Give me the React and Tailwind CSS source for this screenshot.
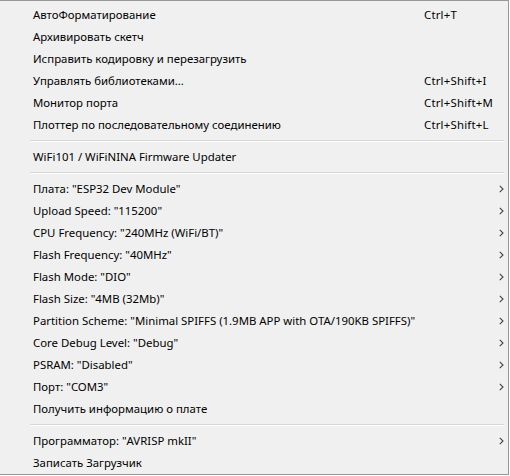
import React from 'react';

const groups = [
  [
    { label: 'АвтоФорматирование', shortcut: 'Ctrl+T' },
    { label: 'Архивировать скетч' },
    { label: 'Исправить кодировку и перезагрузить' },
    { label: 'Управлять библиотеками...', shortcut: 'Ctrl+Shift+I' },
    { label: 'Монитор порта', shortcut: 'Ctrl+Shift+M' },
    { label: 'Плоттер по последовательному соединению', shortcut: 'Ctrl+Shift+L' },
  ],
  [{ label: 'WiFi101 / WiFiNINA Firmware Updater' }],
  [
    { label: 'Плата: "ESP32 Dev Module"', sub: true },
    { label: 'Upload Speed: "115200"', sub: true },
    { label: 'CPU Frequency: "240MHz (WiFi/BT)"', sub: true },
    { label: 'Flash Frequency: "40MHz"', sub: true },
    { label: 'Flash Mode: "DIO"', sub: true },
    { label: 'Flash Size: "4MB (32Mb)"', sub: true },
    { label: 'Partition Scheme: "Minimal SPIFFS (1.9MB APP with OTA/190KB SPIFFS)"', sub: true },
    { label: 'Core Debug Level: "Debug"', sub: true },
    { label: 'PSRAM: "Disabled"', sub: true },
    { label: 'Порт: "COM3"', sub: true },
    { label: 'Получить информацию о плате' },
  ],
  [
    { label: 'Программатор: "AVRISP mkII"', sub: true },
    { label: 'Записать Загрузчик' },
  ],
];

const Chevron = () => (
  <svg width="5" height="8" viewBox="0 0 5 8" className="block">
    <path d="M0.8 0.8 L4 4 L0.8 7.2" fill="none" stroke="#444" strokeWidth="1.1" />
  </svg>
);

const MenuItem = ({ label, shortcut, sub }) => (
  <div className="h-[22px] flex items-center relative pb-px">
    <span className="pl-[33px] flex-1 whitespace-nowrap">{label}</span>
    {shortcut && (
      <span className="absolute left-[424px] whitespace-nowrap tracking-[0.2px]">{shortcut}</span>
    )}
    {sub && (
      <span className="absolute left-[499px] top-[7px]">
        <Chevron />
      </span>
    )}
  </div>
);

const Separator = () => (
  <div className="h-[10px] pt-[4px] pl-[30px] pr-[4px]">
    <div className="h-px bg-[#d7d7d7]" />
    <div className="h-px bg-white" />
  </div>
);

export default function App() {
  return (
    <div
      className="w-[509px] h-[475px] bg-[#f0f0f0] border-t border-r border-b border-[#979797] pt-[3px] text-[11.4px] text-black leading-none"
      style={{ fontFamily: '"Noto Sans", "Open Sans", sans-serif' }}
    >
      {groups.map((g, i) => (
        <React.Fragment key={i}>
          {i > 0 && <Separator />}
          {g.map((item, j) => (
            <MenuItem key={j} {...item} />
          ))}
        </React.Fragment>
      ))}
    </div>
  );
}
